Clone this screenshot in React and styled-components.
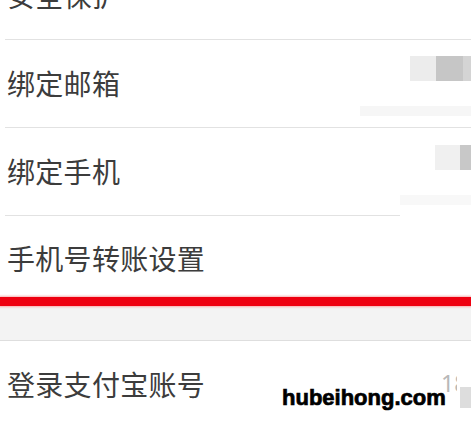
import React from "react";
import styled, { createGlobalStyle } from "styled-components";

const GlobalStyle = createGlobalStyle`
  html, body {
    margin: 0;
    padding: 0;
    background: #ffffff;
    overflow: hidden;
  }
  body {
    font-family: "Noto Sans CJK SC", "Noto Sans", sans-serif;
  }
`;

const ROWS = [
  { label: "安全保护", line: "full" },
  {
    label: "绑定邮箱",
    line: "full",
    mosaic: [
      { left: 410, top: 16, width: 26, height: 25, color: "#ececec" },
      { left: 436, top: 16, width: 27, height: 25, color: "#c6c6c6" },
      { left: 463, top: 16, width: 8, height: 25, color: "#d4d4d4" },
      { left: 360, top: 66, width: 111, height: 10, color: "#f6f6f6" },
    ],
  },
  {
    label: "绑定手机",
    line: "short",
    mosaic: [
      { left: 435, top: 17, width: 25, height: 25, color: "#f0f0f0" },
      { left: 460, top: 17, width: 11, height: 25, color: "#c8c8c8" },
      { left: 400, top: 67, width: 71, height: 10, color: "#f8f8f8" },
    ],
  },
  { label: "手机号转账设置", line: "red" },
];

export default function App() {
  return (
    <>
      <GlobalStyle />
      <Page>
        <List>
          {ROWS.map((row) => (
            <Row key={row.label} line={row.line}>
              <Label>{row.label}</Label>
              {row.mosaic &&
                row.mosaic.map((m, i) => (
                  <Pixel
                    key={i}
                    style={{
                      left: m.left,
                      top: m.top,
                      width: m.width,
                      height: m.height,
                      background: m.color,
                    }}
                  />
                ))}
            </Row>
          ))}
        </List>
        <Gap />
        <Row line="none">
          <Label>登录支付宝账号</Label>
          <Value>18</Value>
          <Pixel
            style={{ left: 460, top: 46, width: 11, height: 21, background: "#dddddd" }}
          />
        </Row>
        <Watermark>hubeihong.com</Watermark>
      </Page>
    </>
  );
}

const Page = styled.div`
  position: relative;
  width: 471px;
  height: 424px;
  overflow: hidden;
  background: #ffffff;
`;

const List = styled.div`
  display: flex;
  flex-direction: column;
  margin-top: -48px;
`;

const Row = styled.div`
  position: relative;
  display: flex;
  align-items: center;
  height: ${(p) => (p.line === "red" ? "90px" : "88px")};
  padding-left: 7px;
  padding-bottom: ${(p) => (p.line === "red" ? "7px" : "3px")};
  box-sizing: border-box;

  &::after {
    content: "";
    position: absolute;
    left: ${(p) => (p.line === "red" ? "0" : "5px")};
    right: ${(p) => (p.line === "short" ? "71px" : "0")};
    bottom: 0;
    height: ${(p) => (p.line === "red" ? "9px" : "1px")};
    background: ${(p) =>
      p.line === "red" ? "#ee0010" : p.line === "none" ? "transparent" : "#e2e2e2"};
    box-shadow: ${(p) => (p.line === "red" ? "0 0 2px 1px #f7b0b0" : "none")};
  }
`;

const Label = styled.span`
  font-size: 28px;
  line-height: 1;
  color: #3c3c3c;
  letter-spacing: 0.3px;
`;

const Value = styled.span`
  margin-left: auto;
  margin-right: 14px;
  width: 16px;
  overflow: hidden;
  white-space: nowrap;
  font-size: 23px;
  line-height: 1;
  color: #b8b8b8;
  font-family: "Noto Sans", sans-serif;
`;

const Pixel = styled.div`
  position: absolute;
`;

const Gap = styled.div`
  height: 33px;
  background: #f3f3f3;
  border-top: 1px solid #fbe6e6;
  border-bottom: 1px solid #dedede;
`;

const Watermark = styled.div`
  position: absolute;
  left: 282px;
  top: 385px;
  font-family: "Liberation Sans", Arial, sans-serif;
  font-weight: bold;
  font-size: 22px;
  line-height: 1.15;
  color: #000000;
  -webkit-text-stroke: 0.7px #000000;
`;
